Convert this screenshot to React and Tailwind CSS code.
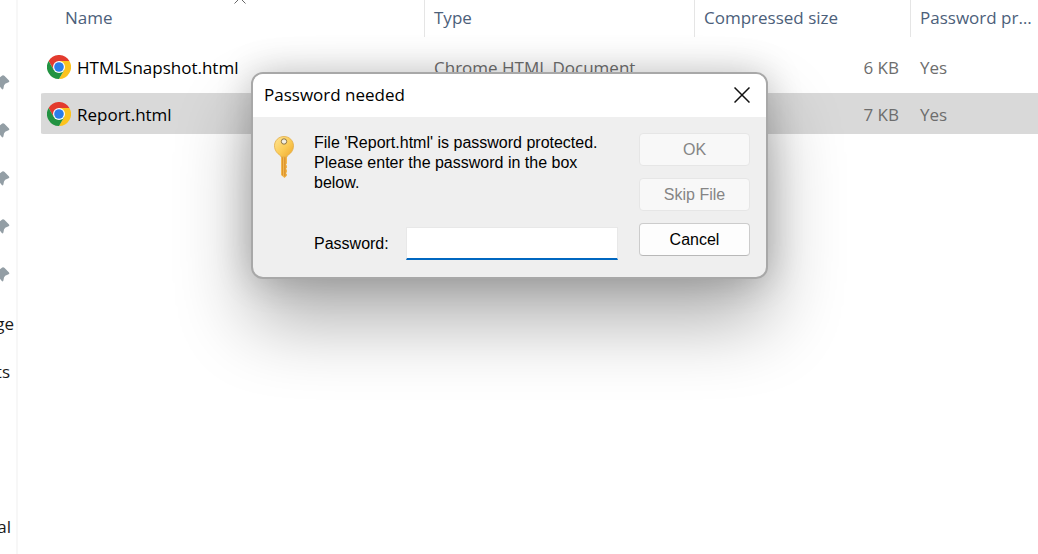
import React, { useState } from 'react';

const files = [
    { id: 1, name: 'HTMLSnapshot.html', type: 'Chrome HTML Document', size: '6 KB', locked: 'Yes', selected: false },
    { id: 2, name: 'Report.html', type: 'Chrome HTML Document', size: '7 KB', locked: 'Yes', selected: true },
];

const pins = [1, 2, 3, 4, 5];

const ChromeIcon = () => (
    <svg viewBox="0 0 48 48" className="w-6 h-6 shrink-0" aria-hidden="true">
        <path d="M24 12h20.8A24 24 0 0 0 3.2 12l10.4 18z" fill="#e33b2e" />
        <path d="M34.4 30 24 48A24 24 0 0 0 44.8 12H24z" fill="#fcc31e" />
        <path d="M13.6 30 3.2 12A24 24 0 0 0 24 48l10.4-18z" fill="#229342" />
        <circle cx="24" cy="24" r="12" fill="#fff" />
        <circle cx="24" cy="24" r="9.6" fill="#2b7de9" />
    </svg>
);

const PinIcon = () => (
    <svg viewBox="0 0 10 16" className="w-[10px] h-4" fill="#939ea5" aria-hidden="true">
        <path d="M0 3.2 1.6 2q1.4-1.4 3 0L9 6.4q1 1.1-.4 1.9L5.200 9.800 4 11.500 3.400 14.500Q2.800 16 1.800 15L0 12.800z" />
    </svg>
);

const KeyIcon = () => (
    <svg viewBox="0 0 20 43" className="w-5 h-[43px]" aria-hidden="true">
        <defs>
            <linearGradient id="keyHead" x1="0" y1="0" x2="1" y2="1">
                <stop offset="0" stopColor="#ffe596" />
                <stop offset="0.55" stopColor="#fbcb55" />
                <stop offset="1" stopColor="#eda62c" />
            </linearGradient>
        </defs>
        <path d="M7 18h6v9.500l-1 1 1 1.200v2l-1 1 1 1.300v2l-1 1.200 1 1v1.300L10.500 42 7 39z" fill="#f3b64a" />
        <path d="M8.500 20v19.500" stroke="#dc952f" strokeWidth="1" />
        <path d="M10.900 20v20.500" stroke="#cf8424" strokeWidth="1" />
        <path
            d="M10 .5c5.400 0 9.500 4.200 9.500 9.300 0 4.500-2.500 7.500-6 9.800L12.800 21H7.200l-.7-1.400C3 17.300.5 14.300.5 9.800.5 4.700 4.600.5 10 .5z"
            fill="url(#keyHead)"
            stroke="#e2ac46"
            strokeWidth="0.8"
        />
        <circle cx="10" cy="5.500" r="2.700" fill="#f3efe4" stroke="#8d7443" strokeWidth="1" />
    </svg>
);

const Sidebar = () => (
    <nav className="w-[18px] shrink-0 overflow-hidden border-r-2 border-[#f7f7f7] pt-[58px] text-[17px] text-[#1a1a1a]">
        {pins.map(pin => (
            <div key={pin} className="flex h-12 items-center">
                <PinIcon />
            </div>
        ))}
        <div className="flex h-12 items-center justify-end pt-[3px] pr-[2px]">ge</div>
        <div className="flex h-12 items-center justify-end pt-[3px] pr-[6px]">ts</div>
        <div className="mt-[107px] flex h-12 items-center justify-end pt-[3px] pr-[5px]">al</div>
    </nav>
);

const FileTable = () => (
    <table className="w-full table-fixed border-separate border-spacing-0 text-left text-[17px]">
        <thead className="text-[#4c607a]">
            <tr>
                <th className="w-[384px] p-0 pb-[6px] font-normal">
                    <div className="relative ml-[15px] h-[37px] border-r border-[#e5e5e5] pl-[9px] leading-[35px]">
                        Name
                        <svg viewBox="0 0 12 7" className="absolute -top-[3px] left-1/2 h-[7px] w-3 -translate-x-1/2" fill="none" stroke="#666" aria-hidden="true">
                            <path d="M.5 6.500 6 1l5.500 5.500" />
                        </svg>
                    </div>
                </th>
                <th className="w-[270px] p-0 pb-[6px] font-normal">
                    <div className="h-[37px] border-r border-[#e5e5e5] pl-[9px] leading-[35px]">Type</div>
                </th>
                <th className="w-[216px] p-0 pb-[6px] font-normal">
                    <div className="h-[37px] border-r border-[#e5e5e5] pl-[9px] leading-[35px]">Compressed size</div>
                </th>
                <th className="p-0 pb-[6px] font-normal">
                    <div className="h-[37px] truncate pr-1 pl-[9px] leading-[35px]">Password protected</div>
                </th>
            </tr>
        </thead>
        <tbody className="text-[#6d6d6d]">
            {files.map(file => (
                <tr key={file.id} className={file.selected ? '[&>td]:bg-[#d9d9d9]' : ''}>
                    <td className="h-[47px] rounded-l-sm border-y-[3px] border-transparent bg-clip-padding p-0 pl-[6px]">
                        <div className="flex items-center gap-[6px] text-black">
                            <ChromeIcon />
                            <span className="pt-[3px]">{file.name}</span>
                        </div>
                    </td>
                    <td className="border-y-[3px] border-transparent bg-clip-padding p-0 pt-[3px] pl-[9px]">{file.type}</td>
                    <td className="border-y-[3px] border-transparent bg-clip-padding p-0 pt-[3px] pr-3 text-right">{file.size}</td>
                    <td className="border-y-[3px] border-transparent bg-clip-padding p-0 pt-[3px] pl-[9px]">{file.locked}</td>
                </tr>
            ))}
        </tbody>
    </table>
);

const PasswordDialog = () => {
    const [password, setPassword] = useState('');

    return (
        <div
            role="dialog"
            aria-labelledby="dialog-title"
            className="absolute top-[72px] left-[251px] w-[517px] overflow-hidden rounded-xl border-2 border-[#a8a8a8] bg-[#efefef] shadow-[0_42px_76px_rgba(0,0,0,0.32),0_0_36px_rgba(0,0,0,0.2)]"
        >
            <div className="flex h-[43px] items-center justify-between bg-white pr-4 pb-[2px] pl-[11px]">
                <h1 id="dialog-title" className="text-[17px] text-black">Password needed</h1>
                <button aria-label="Close">
                    <svg viewBox="0 0 16 16" className="h-4 w-4" stroke="#111" strokeWidth="1.500" aria-hidden="true">
                        <path d="M.5.5l15 15M15.500.5l-15 15" />
                    </svg>
                </button>
            </div>

            <form className="flex pt-4 pr-4 pb-[17px] pl-[21px] font-['Liberation_Sans',Arial,sans-serif] text-base text-black">
                <div className="mr-5 pt-[3px]">
                    <KeyIcon />
                </div>
                <div className="mr-[21px] flex flex-1 flex-col justify-between">
                    <p className="leading-5">
                        File 'Report.html' is password protected. Please enter the password in the box below.
                    </p>
                    <div className="flex items-center justify-between">
                        <label htmlFor="password">Password:</label>
                        <input
                            id="password"
                            type="password"
                            value={password}
                            onChange={e => setPassword(e.target.value)}
                            className="h-[33px] w-[212px] border border-b-2 border-[#e8e8e8] border-b-[#0067c0] bg-white px-2 outline-none"
                        />
                    </div>
                </div>
                <div className="flex w-[111px] flex-col gap-3 pb-1">
                    <button type="button" disabled className="h-[33px] rounded border border-[#e6e6e6] bg-[#f8f8f8] text-[#858585]">OK</button>
                    <button type="button" disabled className="h-[33px] rounded border border-[#e6e6e6] bg-[#f8f8f8] text-[#858585]">Skip File</button>
                    <button type="button" className="h-[33px] rounded border border-[#cccccc] border-b-[#b8b8b8] bg-[#fdfdfd]">Cancel</button>
                </div>
            </form>
        </div>
    );
};

const App = () => (
    <div className="relative flex min-h-screen overflow-hidden bg-white font-['Open_Sans','Noto_Sans',sans-serif]">
        <Sidebar />
        <main className="min-w-0 flex-1 pl-[23px]">
            <FileTable />
        </main>
        <PasswordDialog />
    </div>
);

export default App;
